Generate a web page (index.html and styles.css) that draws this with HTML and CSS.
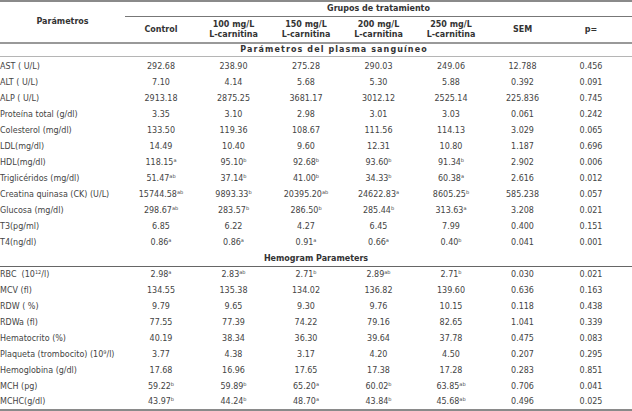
FILE: index.html
```html
<!DOCTYPE html>
<html lang="es">
<head>
<meta charset="utf-8">
<title>Parámetros</title>
<link rel="stylesheet" href="styles.css">
</head>
<body>
<table class="t">
<colgroup>
<col class="c0"><col class="c1"><col class="c2"><col class="c3"><col class="c4"><col class="c5"><col class="c6"><col class="c7">
</colgroup>
<thead>
<tr class="h1">
<th rowspan="2" class="param">Parámetros</th>
<th colspan="7" class="group">Grupos de tratamiento</th>
</tr>
<tr class="h2">
<th>Control</th>
<th>100 mg/L<br>L-carnitina</th>
<th>150 mg/L<br>L-carnitina</th>
<th>200 mg/L<br>L-carnitina</th>
<th>250 mg/L<br>L-carnitina</th>
<th>SEM</th>
<th class="p">p=</th>
</tr>
</thead>
<tbody>
<tr class="sec plasma"><td colspan="8">Parámetros del plasma sanguíneo</td></tr>
<tr class="first"><td>AST ( U/L)</td><td>292.68</td><td>238.90</td><td>275.28</td><td>290.03</td><td>249.06</td><td>12.788</td><td class="p">0.456</td></tr>
<tr><td>ALT ( U/L)</td><td>7.10</td><td>4.14</td><td>5.68</td><td>5.30</td><td>5.88</td><td>0.392</td><td class="p">0.091</td></tr>
<tr><td>ALP ( U/L)</td><td>2913.18</td><td>2875.25</td><td>3681.17</td><td>3012.12</td><td>2525.14</td><td>225.836</td><td class="p">0.745</td></tr>
<tr><td>Proteína total (g/dl)</td><td>3.35</td><td>3.10</td><td>2.98</td><td>3.01</td><td>3.03</td><td>0.061</td><td class="p">0.242</td></tr>
<tr><td>Colesterol (mg/dl)</td><td>133.50</td><td>119.36</td><td>108.67</td><td>111.56</td><td>114.13</td><td>3.029</td><td class="p">0.065</td></tr>
<tr><td>LDL(mg/dl)</td><td>14.49</td><td>10.40</td><td>9.60</td><td>12.31</td><td>10.80</td><td>1.187</td><td class="p">0.696</td></tr>
<tr><td>HDL(mg/dl)</td><td>118.15<sup>a</sup></td><td>95.10<sup>b</sup></td><td>92.68<sup>b</sup></td><td>93.60<sup>b</sup></td><td>91.34<sup>b</sup></td><td>2.902</td><td class="p">0.006</td></tr>
<tr><td>Triglicéridos (mg/dl)</td><td>51.47<sup>ab</sup></td><td>37.14<sup>b</sup></td><td>41.00<sup>b</sup></td><td>34.33<sup>b</sup></td><td>60.38<sup>a</sup></td><td>2.616</td><td class="p">0.012</td></tr>
<tr><td>Creatina quinasa (CK) (U/L)</td><td>15744.58<sup>ab</sup></td><td>9893.33<sup>b</sup></td><td>20395.20<sup>ab</sup></td><td>24622.83<sup>a</sup></td><td>8605.25<sup>b</sup></td><td>585.238</td><td class="p">0.057</td></tr>
<tr><td>Glucosa (mg/dl)</td><td>298.67<sup>ab</sup></td><td>283.57<sup>b</sup></td><td>286.50<sup>b</sup></td><td>285.44<sup>b</sup></td><td>313.63<sup>a</sup></td><td>3.208</td><td class="p">0.021</td></tr>
<tr><td>T3(pg/ml)</td><td>6.85</td><td>6.22</td><td>4.27</td><td>6.45</td><td>7.99</td><td>0.400</td><td class="p">0.151</td></tr>
<tr><td>T4(ng/dl)</td><td>0.86<sup>a</sup></td><td>0.86<sup>a</sup></td><td>0.91<sup>a</sup></td><td>0.66<sup>a</sup></td><td>0.40<sup>b</sup></td><td>0.041</td><td class="p">0.001</td></tr>
<tr class="sec hemo"><td colspan="8">Hemogram Parameters</td></tr>
<tr><td>RBC &nbsp;(10<sup>12</sup>/l)</td><td>2.98<sup>a</sup></td><td>2.83<sup>ab</sup></td><td>2.71<sup>b</sup></td><td>2.89<sup>ab</sup></td><td>2.71<sup>b</sup></td><td>0.030</td><td class="p">0.021</td></tr>
<tr><td>MCV (fl)</td><td>134.55</td><td>135.38</td><td>134.02</td><td>136.82</td><td>139.60</td><td>0.636</td><td class="p">0.163</td></tr>
<tr><td>RDW ( %)</td><td>9.79</td><td>9.65</td><td>9.30</td><td>9.76</td><td>10.15</td><td>0.118</td><td class="p">0.438</td></tr>
<tr><td>RDWa (fl)</td><td>77.55</td><td>77.39</td><td>74.22</td><td>79.16</td><td>82.65</td><td>1.041</td><td class="p">0.339</td></tr>
<tr><td>Hematocrito (%)</td><td>40.19</td><td>38.34</td><td>36.30</td><td>39.64</td><td>37.78</td><td>0.475</td><td class="p">0.083</td></tr>
<tr><td>Plaqueta (trombocito) (10<sup>9</sup>/l)</td><td>3.77</td><td>4.38</td><td>3.17</td><td>4.20</td><td>4.50</td><td>0.207</td><td class="p">0.295</td></tr>
<tr><td>Hemoglobina (g/dl)</td><td>17.68</td><td>16.96</td><td>17.65</td><td>17.38</td><td>17.28</td><td>0.283</td><td class="p">0.851</td></tr>
<tr><td>MCH (pg)</td><td>59.22<sup>b</sup></td><td>59.89<sup>b</sup></td><td>65.20<sup>a</sup></td><td>60.02<sup>b</sup></td><td>63.85<sup>ab</sup></td><td>0.706</td><td class="p">0.041</td></tr>
<tr class="last"><td>MCHC(g/dl)</td><td>43.97<sup>b</sup></td><td>44.24<sup>b</sup></td><td>48.70<sup>a</sup></td><td>43.84<sup>b</sup></td><td>45.68<sup>ab</sup></td><td>0.496</td><td class="p">0.025</td></tr>
</tbody>
</table>
</body>
</html>
```
FILE: styles.css
```css
html, body {
  margin: 0;
  padding: 0;
  background: #ffffff;
}
body {
  font-family: "DejaVu Sans", Verdana, sans-serif;
  font-size: 8px;
  color: #444;
}
.t {
  width: 632px;
  table-layout: fixed;
  border-collapse: collapse;
  border-top: 2px solid #8a8a8a;
  border-bottom: 2px solid #8a8a8a;
}
.c0 { width: 125px; }
.c1 { width: 72px; }
.c2 { width: 73px; }
.c3 { width: 72px; }
.c4 { width: 73px; }
.c5 { width: 72px; }
.c6 { width: 71px; }
.c7 { width: 74px; }
th, td {
  padding: 0;
  text-align: center;
  white-space: nowrap;
  line-height: 10px;
}
th {
  font-weight: bold;
  color: #333;
  vertical-align: middle;
}
.h1 th { height: 14px; }
.group { border-bottom: 1px solid #777; }
.h2 th { height: 25px; }
.h2 { border-bottom: 2px solid #999; }
.p { padding-right: 8px; }
td { height: 16px; vertical-align: middle; }
tbody td:first-child { text-align: left; }
.sec td {
  font-weight: bold;
  color: #333;
  text-align: center !important;
}
.plasma td {
  height: 12px;
  padding-left: 36px;
  letter-spacing: 1.1px;
  border-bottom: 1px solid #b5b5b5;
}
.first td { height: 16px; padding-top: 2px; }
.first td.p { padding-right: 8px; }
.hemo td {
  height: 15px;
  border-bottom: 1px solid #666;
}
.last td { height: 14px; }
sup {
  font-size: 5px;
  line-height: 0;
  vertical-align: 3px;
}
```
